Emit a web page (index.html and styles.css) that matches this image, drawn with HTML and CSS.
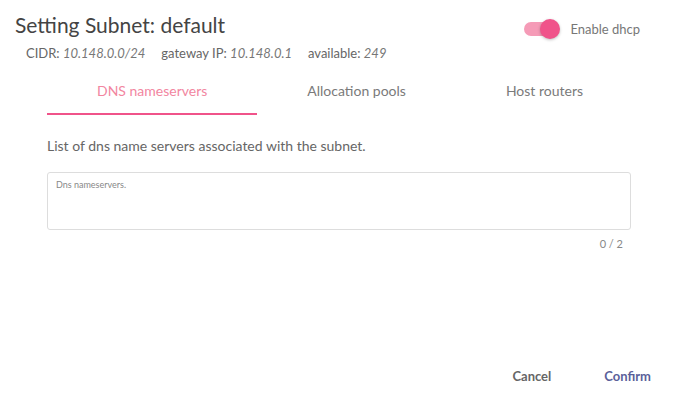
FILE: index.html
```html
<!DOCTYPE html>
<html lang="en">
<head>
    <meta charset="UTF-8">
    <title>Setting Subnet</title>
    <link rel="stylesheet" href="styles.css">
</head>
<body>
<div class="dialog">
    <div class="dialog-header">
        <div class="heading">
            <h2 class="title">Setting Subnet: default</h2>
            <div class="subnet-info">
                <span>CIDR: <em>10.148.0.0/24</em></span>
                <span>gateway IP: <em>10.148.0.1</em></span>
                <span>available: <em>249</em></span>
            </div>
        </div>
        <label class="switch">
            <span class="switch-track"><span class="switch-thumb"></span></span>
            <span class="switch-label">Enable dhcp</span>
        </label>
    </div>

    <div class="tabs">
        <div class="tab active">DNS nameservers</div>
        <div class="tab">Allocation pools</div>
        <div class="tab">Host routers</div>
    </div>

    <div class="tab-panel">
        <p class="desc">List of dns name servers associated with the subnet.</p>
        <div class="field">
            <textarea placeholder="Dns nameservers."></textarea>
        </div>
        <div class="counter">0 / 2</div>
    </div>

    <div class="dialog-actions">
        <button class="btn">Cancel</button>
        <button class="btn btn-primary">Confirm</button>
    </div>
</div>
</body>
</html>
```

FILE: styles.css
```css
/* General */
body {
    margin: 0;
    background-color: #fff;
    font-family: Lato, "Noto Sans", sans-serif;
    color: #666;
}

.dialog {
    width: 678px;
    height: 403px;
    box-sizing: border-box;
    padding: 13px 15px 0 15px;
    display: flex;
    flex-direction: column;
}

/* Header */
.dialog-header {
    display: flex;
    justify-content: space-between;
    align-items: flex-start;
}

.title {
    margin: 0;
    font-size: 21px;
    font-weight: 400;
    line-height: 24px;
    color: #444;
}

.subnet-info {
    margin: 8px 0 0 11px;
    font-size: 13px;
    line-height: 16px;
    color: #666;
    display: flex;
    gap: 16px;
}

.subnet-info em {
    color: #777;
}

/* Toggle */
.switch {
    display: flex;
    align-items: center;
    margin: 8px 23px 0 0;
}

.switch-track {
    position: relative;
    width: 30px;
    height: 14px;
    border-radius: 7px;
    background-color: #f59bb7;
    margin-left: 12px;
}

.switch-thumb {
    position: absolute;
    right: -6px;
    top: -3px;
    width: 20px;
    height: 20px;
    border-radius: 50%;
    background-color: #f0538a;
    box-shadow: 0 1px 3px rgba(0, 0, 0, 0.25);
}

.switch-label {
    margin-left: 16px;
    font-size: 13px;
    color: #777;
}

/* Tabs */
.tabs {
    display: flex;
    margin: 9px 0 0 32px;
}

.tab {
    padding: 12px 50px 13px 50px;
    font-size: 14px;
    line-height: 18px;
    color: #7a7a7a;
    border-bottom: 2px solid transparent;
}

.tab.active {
    color: #f2869f;
    border-bottom-color: #f0538a;
}

/* Tab content */
.tab-panel {
    margin-left: 32px;
    width: 583px;
}

.desc {
    margin: 22px 0 0 0;
    font-size: 14px;
    line-height: 18px;
    color: #666;
}

.field textarea {
    display: block;
    box-sizing: border-box;
    width: 584px;
    height: 58px;
    margin-top: 17px;
    padding: 6px 8px;
    border: 1px solid #ddd;
    border-radius: 3px;
    resize: none;
    font-family: Lato, sans-serif;
    font-size: 9px;
    color: #555;
}

.field textarea::placeholder {
    color: #888;
}

.counter {
    margin-top: 7px;
    padding-right: 7px;
    text-align: right;
    font-size: 11px;
    color: #888;
}

/* Footer buttons */
.dialog-actions {
    margin-top: auto;
    display: flex;
    justify-content: flex-end;
    gap: 33px;
    padding: 0 2px 19px 0;
}

.btn {
    border: none;
    background: none;
    padding: 0 10px;
    font-family: Lato, sans-serif;
    font-size: 13px;
    font-weight: 700;
    color: #666;
    cursor: pointer;
}

.btn-primary {
    color: #5b5f9a;
}
```
